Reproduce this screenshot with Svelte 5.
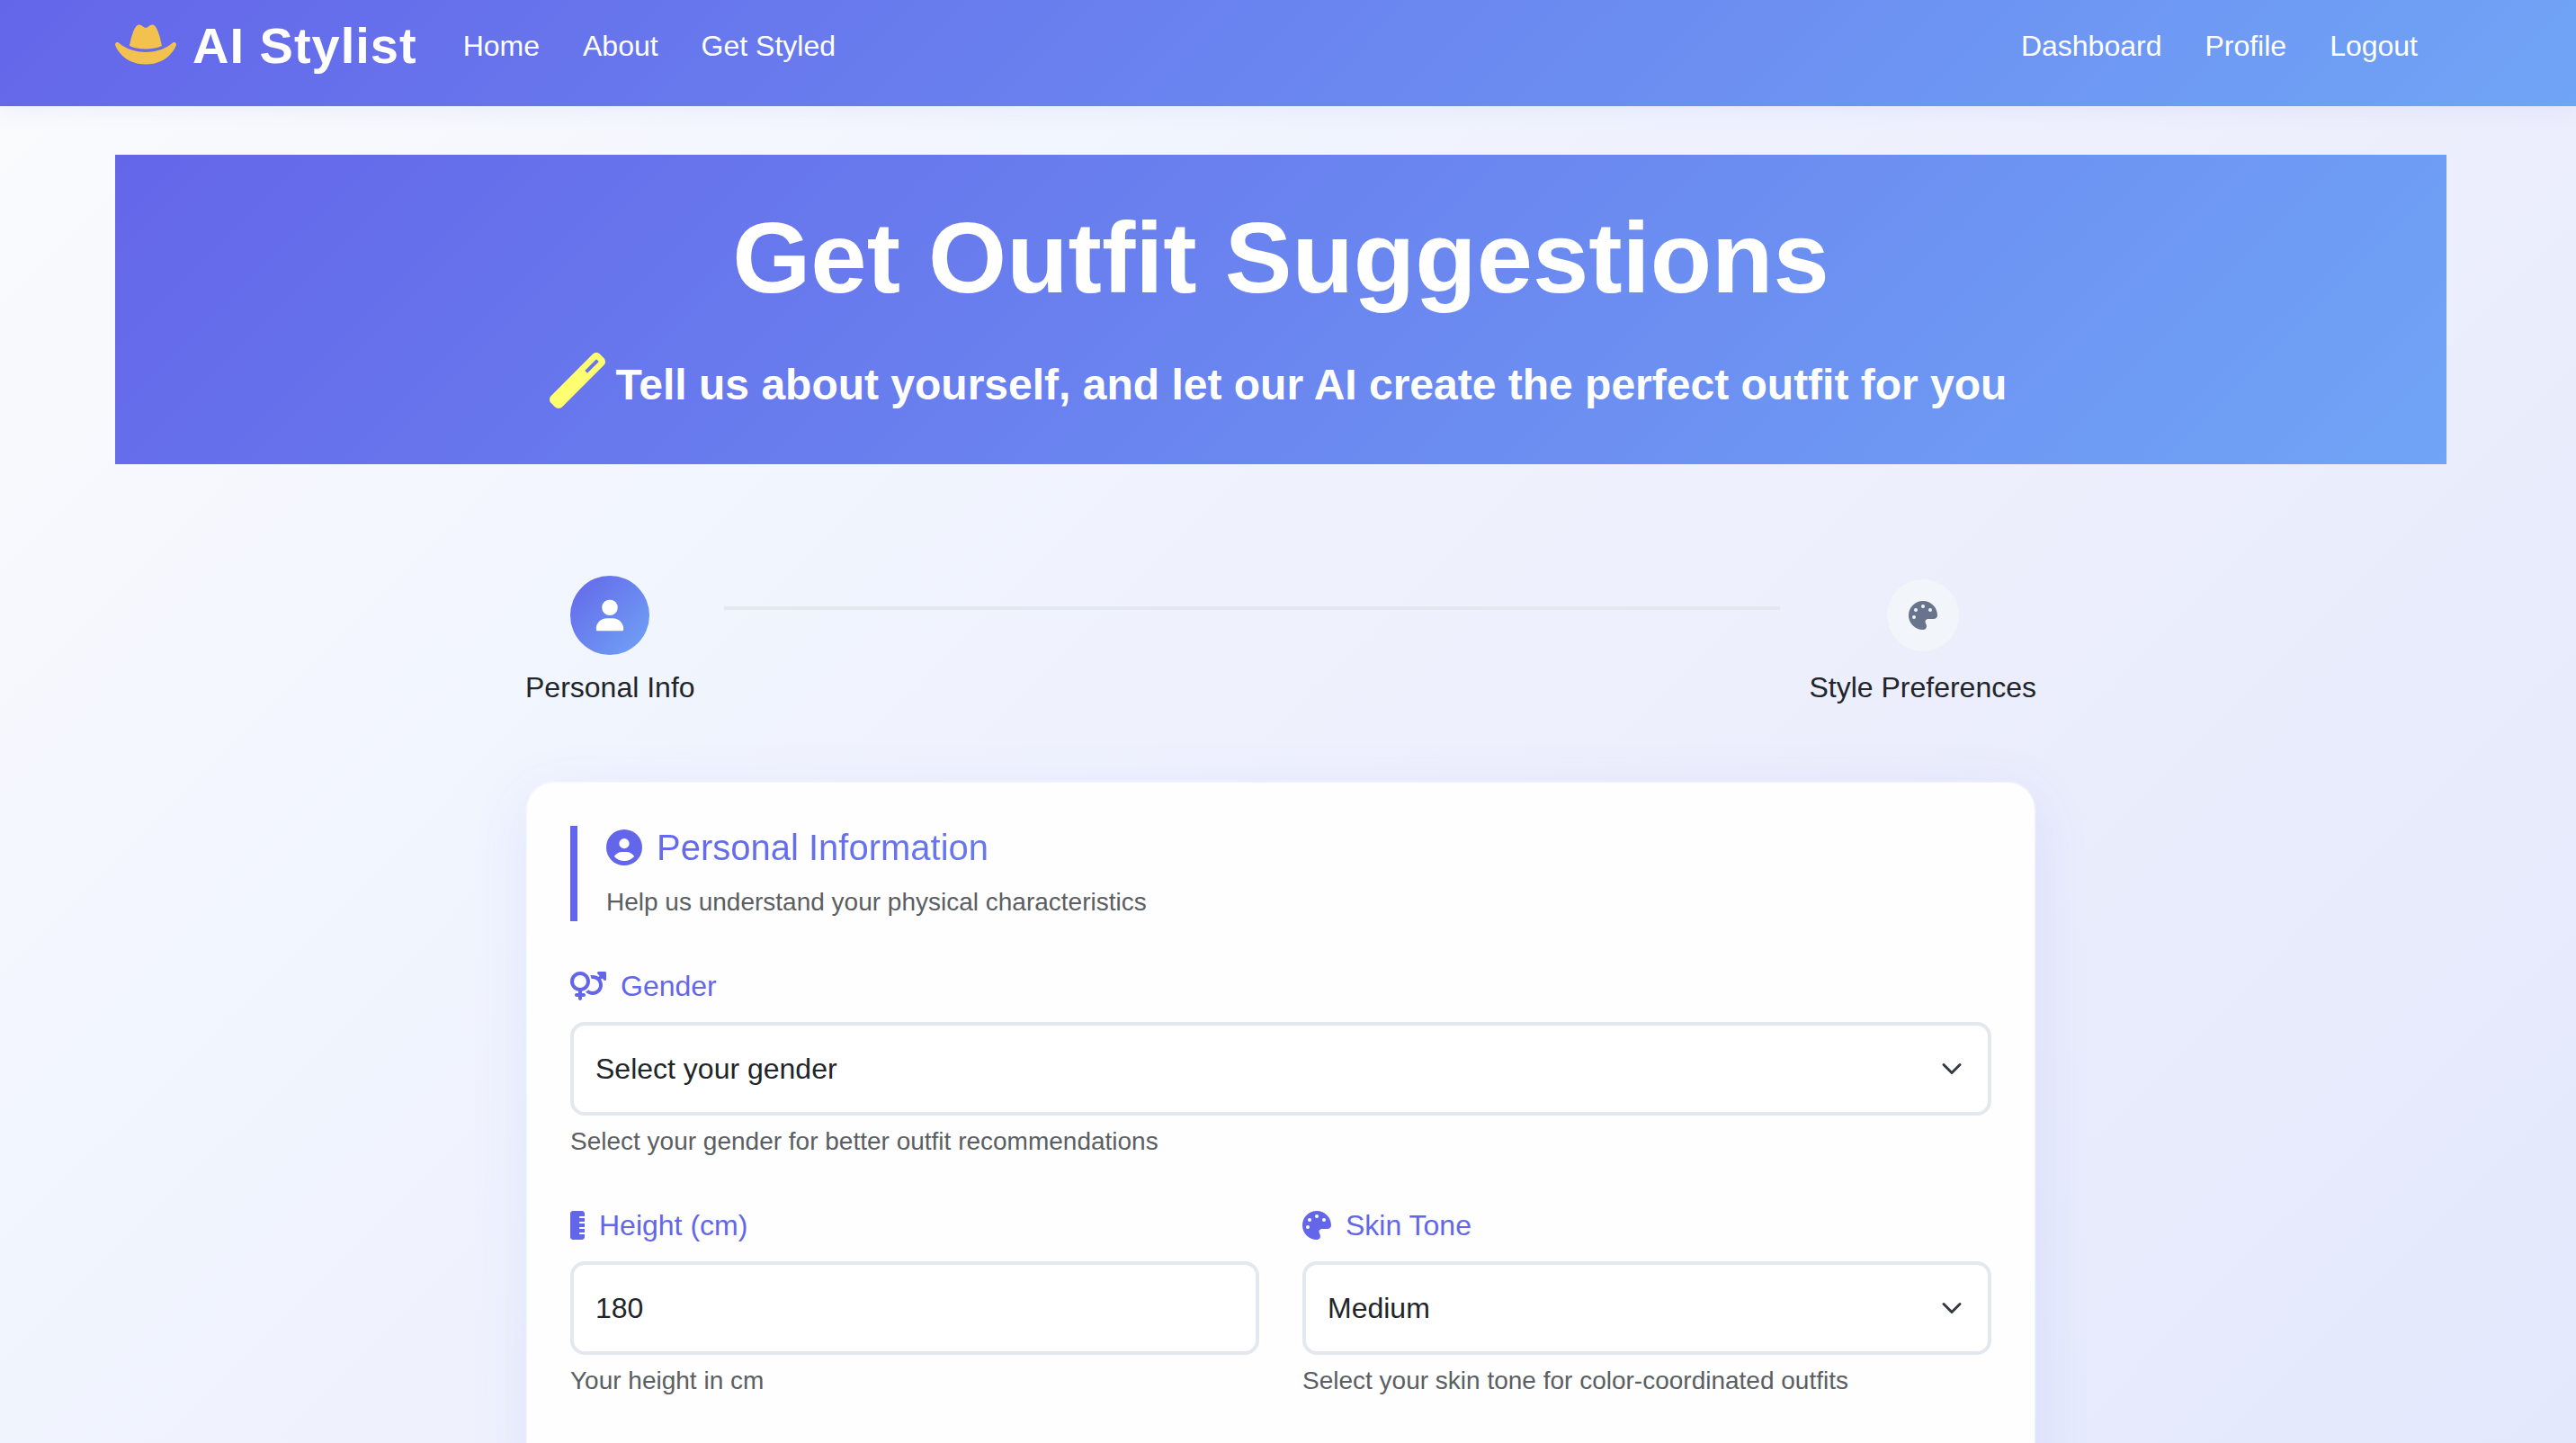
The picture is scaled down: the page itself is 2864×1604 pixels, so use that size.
<script>
  const icons = {
    hat: {
      box: '0 0 640 512',
      d: 'M320 64c14.4 0 22.3-7 30.8-14.4C360.4 41.1 370.7 32 392 32c49.3 0 84.4 152.1 97.9 221.9C447.8 272.1 390.9 288 320 288s-127.8-15.9-169.9-34.1C163.6 184.1 198.7 32 248 32c21.3 0 31.6 9.1 41.2 17.6C297.7 57 305.6 64 320 64zM111.1 270.7c47.2 24.5 117.5 49.3 209 49.3s161.8-24.8 208.9-49.3c24.8-12.9 49.8-28.3 70.1-47.7c7.9-7.9 20.2-9.2 29.6-3.3c9.5 5.9 13.5 17.9 9.9 28.5c-13.5 37.7-38.4 72.3-66.1 100.6C523.7 398.9 443.6 448 320 448s-203.6-49.1-252.5-99.2C39.8 320.4 14.9 285.8 1.4 248.1c-3.6-10.6 .4-22.6 9.9-28.5c9.5-5.9 21.7-4.5 29.6 3.3c20.4 19.4 45.3 34.8 70.1 47.7z'
    },
    wand: {
      box: '0 0 512 512',
      d: 'M14.1 463.3c-18.7-18.7-18.7-49.1 0-67.9L395.4 14.1c18.7-18.7 49.1-18.7 67.9 0l34.6 34.6c18.7 18.7 18.7 49.1 0 67.9L116.5 497.9c-18.7 18.7-49.1 18.7-67.9 0L14.1 463.3zM347.6 187.6l105-105L429.4 59.3l-105 105 23.3 23.3z'
    },
    user: {
      box: '0 0 448 512',
      d: 'M224 256A128 128 0 1 0 224 0a128 128 0 1 0 0 256zm-45.7 48C79.8 304 0 383.8 0 482.3C0 498.7 13.3 512 29.7 512H418.3c16.4 0 29.7-13.3 29.7-29.7C448 383.8 368.2 304 269.7 304H178.3z'
    },
    circleUser: {
      box: '0 0 512 512',
      d: 'M399 384.2C376.9 345.8 335.4 320 288 320H224c-47.4 0-88.9 25.8-111 64.2c35.2 39.2 86.2 63.8 143 63.8s107.8-24.7 143-63.8zM0 256a256 256 0 1 1 512 0A256 256 0 1 1 0 256zm256 16a72 72 0 1 0 0-144 72 72 0 1 0 0 144z'
    },
    palette: {
      box: '0 0 512 512',
      d: 'M512 256c0 .9 0 1.8 0 2.7c-.4 36.5-33.6 61.3-70.1 61.3H344c-26.5 0-48 21.5-48 48c0 3.4 .4 6.7 1 9.9c2.1 10.2 6.5 20 10.8 29.9c6.1 13.8 12.1 27.5 12.1 42c0 31.8-21.6 60.7-53.4 62c-3.5 .1-7 .2-10.6 .2C114.6 512 0 397.4 0 256S114.6 0 256 0S512 114.6 512 256zM128 288a32 32 0 1 0 -64 0 32 32 0 1 0 64 0zm0-96a32 32 0 1 0 0-64 32 32 0 1 0 0 64zM288 96a32 32 0 1 0 -64 0 32 32 0 1 0 64 0zm96 96a32 32 0 1 0 0-64 32 32 0 1 0 0 64z'
    },
    venusMars: {
      box: '0 0 640 512',
      d: 'M176 288a112 112 0 1 0 0-224 112 112 0 1 0 0 224zM352 176c0 86.3-62.1 158.1-144 173.1V384h32c17.7 0 32 14.3 32 32s-14.3 32-32 32H208v32c0 17.7-14.3 32-32 32s-32-14.3-32-32V448H112c-17.7 0-32-14.3-32-32s14.3-32 32-32h32V349.1C62.1 334.1 0 262.3 0 176C0 78.8 78.8 0 176 0s176 78.8 176 176zM271.9 360.6c19.3-10.1 36.9-23.1 52.1-38.4c20 18.5 46.7 29.8 76.1 29.8c61.9 0 112-50.1 112-112s-50.1-112-112-112c-7.2 0-14.3 .7-21.1 2c-4.9-21.5-13-41.7-24-60.2C369.3 66 384.4 64 400 64c37 0 71.4 11.4 99.8 31l20.6-20.6L487 41c-6.9-6.9-8.9-17.2-5.2-26.2S494.3 0 504 0H616c13.3 0 24 10.7 24 24V136c0 9.7-5.8 18.5-14.8 22.2s-19.3 1.7-26.2-5.2l-33.4-33.4L545 140.2c19.5 28.4 31 62.7 31 99.8c0 97.2-78.8 176-176 176c-50.5 0-96-21.3-128.1-55.4z'
    },
    ruler: {
      box: '0 0 256 512',
      d: 'M0 48C0 21.5 21.5 0 48 0H208c26.5 0 48 21.5 48 48V96H176c-8.8 0-16 7.2-16 16s7.2 16 16 16h80v64H176c-8.8 0-16 7.2-16 16s7.2 16 16 16h80v64H176c-8.8 0-16 7.2-16 16s7.2 16 16 16h80v64H176c-8.8 0-16 7.2-16 16s7.2 16 16 16h80v48c0 26.5-21.5 48-48 48H48c-26.5 0-48-21.5-48-48V48z'
    }
  };

  const mainLinks = ['Home', 'About', 'Get Styled'];
  const accountLinks = ['Dashboard', 'Profile', 'Logout'];

  let gender = $state('');
  let height = $state(180);
  let skinTone = $state('medium');
</script>

{#snippet icon(name, cls)}
  <svg class="icon {cls}" viewBox={icons[name].box} aria-hidden="true"><path d={icons[name].d} /></svg>
{/snippet}

{#snippet chevron()}
  <svg class="chevron" viewBox="0 0 16 16" aria-hidden="true"><path d="m2 5 6 6 6-6" /></svg>
{/snippet}

<div class="page">
  <nav class="navbar">
    <a class="brand" href="#home">
      {@render icon('hat', 'hat')}
      <span>AI Stylist</span>
    </a>
    <div class="links">
      {#each mainLinks as link}
        <a href="#{link}">{link}</a>
      {/each}
    </div>
    <div class="links account">
      {#each accountLinks as link}
        <a href="#{link}">{link}</a>
      {/each}
    </div>
  </nav>

  <main>
    <header class="hero">
      <h1>Get Outfit Suggestions</h1>
      <p>
        {@render icon('wand', 'wand')}
        <span>Tell us about yourself, and let our AI create the perfect outfit for you</span>
      </p>
    </header>

    <div class="wizard">
      <div class="steps">
        <div class="step active">
          <div class="dot">{@render icon('user', 'step-icon')}</div>
          <span>Personal Info</span>
        </div>
        <div class="line"></div>
        <div class="step">
          <div class="dot">{@render icon('palette', 'step-icon')}</div>
          <span>Style Preferences</span>
        </div>
      </div>

      <form class="card">
        <div class="section">
          <h2>
            {@render icon('circleUser', 'title-icon')}
            <span>Personal Information</span>
          </h2>
          <p class="help">Help us understand your physical characteristics</p>
        </div>

        <div class="field">
          <label for="gender">{@render icon('venusMars', 'label-icon')}Gender</label>
          <div class="control">
            <select id="gender" bind:value={gender}>
              <option value="">Select your gender</option>
              <option value="male">Male</option>
              <option value="female">Female</option>
            </select>
            {@render chevron()}
          </div>
          <p class="help">Select your gender for better outfit recommendations</p>
        </div>

        <div class="row">
          <div class="field">
            <label for="height">{@render icon('ruler', 'label-icon')}Height (cm)</label>
            <div class="control">
              <input id="height" type="number" bind:value={height} />
            </div>
            <p class="help">Your height in cm</p>
          </div>
          <div class="field">
            <label for="skin">{@render icon('palette', 'label-icon')}Skin Tone</label>
            <div class="control">
              <select id="skin" bind:value={skinTone}>
                <option value="light">Light</option>
                <option value="medium">Medium</option>
                <option value="dark">Dark</option>
              </select>
              {@render chevron()}
            </div>
            <p class="help">Select your skin tone for color-coordinated outfits</p>
          </div>
        </div>
      </form>
    </div>
  </main>
</div>

<style>
  :global(body) {
    margin: 0;
  }

  .page {
    --accent: #6466e9;
    --gradient: linear-gradient(135deg, #6466e9, #70a4f6);
    box-sizing: border-box;
    height: 100vh;
    overflow: hidden;
    background: linear-gradient(135deg, #fafbfc 0%, #f1f5fe 32%, #edeffc 60%, #e3e8fc 100%);
    color: #212529;
    font-family: 'Liberation Sans', Arial, sans-serif;
    font-size: 32px;
    line-height: 48px;
  }

  h1,
  h2,
  p {
    margin: 0;
  }

  .icon {
    display: block;
    flex: none;
    fill: currentColor;
  }

  .navbar {
    display: flex;
    align-items: center;
    gap: 51px;
    padding: 9px 176px 25px 128px;
    background: var(--gradient);
    box-shadow: 0 4px 24px rgba(99, 102, 241, 0.08);
  }

  .navbar a {
    color: #fff;
    text-decoration: none;
  }

  .brand {
    display: flex;
    align-items: center;
    gap: 18px;
    font-size: 56px;
    font-weight: 700;
    line-height: 84px;
    letter-spacing: 1px;
  }

  .hat {
    width: 68px;
    color: #f2c14e;
  }

  .links {
    display: flex;
    gap: 48px;
  }

  .account {
    margin-left: auto;
  }

  main {
    padding: 54px 144px 0 128px;
  }

  .hero {
    padding: 48px 48px 52px;
    background: var(--gradient);
    color: #fff;
    font-weight: 700;
    text-align: center;
  }

  h1 {
    margin-bottom: 38px;
    font-size: 112px;
    line-height: 134px;
  }

  .hero p {
    display: flex;
    align-items: flex-start;
    justify-content: center;
    gap: 12px;
    padding-right: 6px;
    font-size: 48px;
    line-height: 72px;
  }

  .wand {
    width: 62px;
    color: #ffff70;
  }

  .wizard {
    max-width: 1680px;
    margin: 128px auto 0;
  }

  .steps {
    display: flex;
    gap: 32px;
    margin-bottom: 80px;
  }

  .step {
    display: flex;
    flex-direction: column;
    align-items: center;
    gap: 16px;
  }

  .dot {
    display: flex;
    align-items: center;
    justify-content: center;
    width: 80px;
    height: 80px;
    border-radius: 50%;
    background: #f2f5f9;
    color: #67748b;
  }

  .active .dot {
    background: var(--gradient);
    color: #fff;
    transform: scale(1.1);
  }

  .step-icon {
    height: 32px;
  }

  .line {
    flex: 1;
    height: 4px;
    margin-top: 30px;
    background: #e3e8ef;
  }

  .card {
    padding: 48px 48px 96px;
    border: 2px solid rgba(255, 255, 255, 0.2);
    border-radius: 32px;
    background: #fefefe;
    background-clip: padding-box;
    box-shadow: 0 16px 64px rgba(99, 102, 241, 0.1);
  }

  .section {
    padding-left: 32px;
    border-left: 8px solid var(--accent);
  }

  h2 {
    display: flex;
    align-items: center;
    gap: 16px;
    margin-bottom: 16px;
    background: var(--gradient);
    background-clip: text;
    color: transparent;
    font-size: 40px;
    font-weight: 400;
    line-height: 48px;
  }

  .title-icon {
    width: 40px;
    color: var(--accent);
  }

  .help {
    color: #5b5e62;
    font-size: 28px;
    line-height: 42px;
  }

  .field {
    margin-top: 48px;
  }

  label {
    display: flex;
    align-items: center;
    gap: 16px;
    margin-bottom: 16px;
    color: var(--accent);
  }

  .label-icon {
    height: 32px;
  }

  .control {
    position: relative;
    margin-bottom: 8px;
  }

  input,
  select {
    display: block;
    box-sizing: border-box;
    width: 100%;
    height: 104px;
    margin: 0;
    padding: 0 24px;
    border: 4px solid #e3e8ef;
    border-radius: 16px;
    background: #fff;
    color: #212529;
    font: inherit;
    appearance: none;
  }

  input {
    appearance: textfield;
  }

  .chevron {
    position: absolute;
    top: 40px;
    right: 32px;
    width: 24px;
    height: 24px;
    fill: none;
    stroke: #343a40;
    stroke-width: 2;
    stroke-linecap: round;
    stroke-linejoin: round;
    pointer-events: none;
  }

  .row {
    display: grid;
    grid-template-columns: 1fr 1fr;
    gap: 48px;
  }
</style>
